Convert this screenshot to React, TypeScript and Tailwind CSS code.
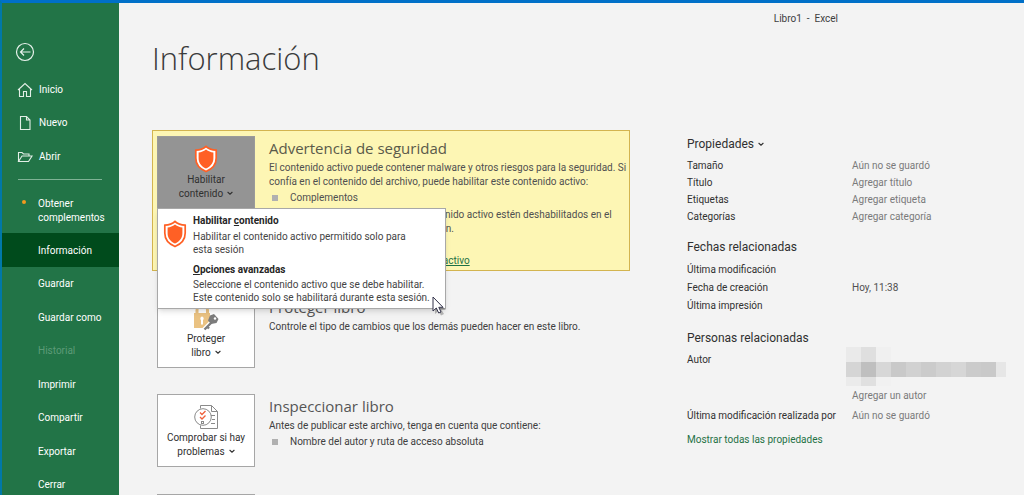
import React from "react";

const rowText = "text-[10px] leading-[14px]";
const sectionTitle = "font-['Open_Sans','Noto_Sans',sans-serif] text-[15px] leading-[25px]";
const groupTitle = "text-[12px] leading-[18px]";

function Chevron() {
  return (
    <svg className="mb-px ml-1 inline-block" width="6" height="5" viewBox="0 0 6 5" fill="none" stroke="currentColor" strokeWidth="1.1">
      <path d="M0.6 1L3 3.2L5.4 1" />
    </svg>
  );
}

function Shield() {
  return (
    <svg width="24" height="28" viewBox="0 0 24 28" fill="none" className="shrink-0">
      <path d="M12 1.5C9.2 4 5.7 5 1.8 5.2V13C1.8 19.5 5.4 23.8 12 26.5C18.6 23.8 22.2 19.5 22.2 13V5.2C18.3 5 14.8 4 12 1.5Z" fill="#fff" stroke="#ff6025" strokeWidth="1.7" />
      <path d="M12 4.6C9.6 6.5 7.2 7.3 4.6 7.5V13.2C4.6 18 7.2 21.3 12 23.5C16.8 21.3 19.4 18 19.4 13.2V7.5C16.8 7.3 14.4 6.5 12 4.6Z" fill="#ff6025" />
    </svg>
  );
}

function LockKey() {
  return (
    <svg width="26" height="28" viewBox="0 0 26 28" fill="none">
      <path d="M4 10V6A5 5 0 0 1 14.500 6V10" stroke="#eac282" strokeWidth="3" />
      <rect x="1" y="9" width="16" height="15" fill="#eac282" />
      <path d="M9 12.500a2 2 0 0 1 1 3.500V20.500h-2v-4.500a2 2 0 0 1 1-3.500Z" fill="#fff" />
      <path d="M11 26L19 18" stroke="#fff" strokeWidth="5" />
      <path d="M17 11.500L21 10L25.500 15L23.500 19L18 20L15 16.500Z" fill="#7c7c7c" />
      <path d="M11.500 25.500L18.500 18.500M14 22.500l2 2" stroke="#7c7c7c" strokeWidth="2.400" />
      <circle cx="22" cy="14.500" r="1.200" fill="#fff" />
    </svg>
  );
}

function Inspect() {
  return (
    <svg width="24" height="24" viewBox="0 0 24 24" fill="none" stroke="#8a8a8a" strokeWidth="1">
      <path d="M6.500 3.500V.5H17.500L23.500 6.500V23.500H6.500V20.500" fill="#fff" />
      <path d="M17.500 .5V6.500H23.500M17 10.500H21M18 14.500H21M17 18.500H21" />
      <circle cx="9" cy="12" r="8.300" fill="#fff" />
      <path d="M6 7.500l2 2 3.500-3.500M6 12l2 2 3.500-3.500" stroke="#ef5f3a" strokeWidth="1.300" />
      <rect x="7.500" y="16.500" width="2" height="2" />
    </svg>
  );
}

function Card({ icon, first, second, dark = false }: { icon: React.ReactNode; first: string; second: string; dark?: boolean }) {
  return (
    <button
      className={
        "flex h-[73px] w-[98px] shrink-0 flex-col items-center border pt-2 text-[10px] leading-[14px] text-[#303030] " +
        (dark ? "border-[#9a9a9a] bg-[#949494]" : "border-[#a6a6a6] bg-white")
      }
    >
      <span className="flex h-7 items-center">{icon}</span>
      <span className="whitespace-nowrap">{first}</span>
      <span className="whitespace-nowrap">
        {second}
        <Chevron />
      </span>
    </button>
  );
}

function Bullet({ children }: { children: React.ReactNode }) {
  return (
    <li className="flex items-center gap-3 pl-[3px] leading-[18px]">
      <span className="h-1.5 w-1.5 bg-[#b0b0b0]" />
      {children}
    </li>
  );
}

const iconProps = { width: 16, height: 16, viewBox: "0 0 16 16", fill: "none", stroke: "#e2eee6", strokeWidth: 1.1 };

const topItems = [
  {
    label: "Inicio",
    icon: (
      <svg {...iconProps}>
        <path d="M2.500 7V14.500H6.500V9.500H9.500V14.500H13.500V7M1 8L8 1.500L15 8" />
      </svg>
    ),
  },
  {
    label: "Nuevo",
    icon: (
      <svg {...iconProps}>
        <path d="M3.500 1.500H9.500L13 5V14.500H3.500ZM9.500 1.500V5H13" />
      </svg>
    ),
  },
  {
    label: "Abrir",
    icon: (
      <svg {...iconProps}>
        <path d="M1.500 12.500V3.500H5L6.500 5H12V7M1.500 12.500L5 7H15L11.500 12.500Z" />
      </svg>
    ),
  },
];

const lowerItems = ["Información", "Guardar", "Guardar como", "Historial", "Imprimir", "Compartir", "Exportar", "Cerrar"];

function Sidebar() {
  return (
    <nav className="flex w-[117px] shrink-0 flex-col bg-[#227447] text-[10px] leading-[14px] text-white">
      <button aria-label="Atrás" className="mt-[39px] ml-[13px] h-5 w-5 shrink-0">
        <svg width="20" height="20" viewBox="0 0 20 20" fill="none" stroke="#e8f2ec" strokeWidth="1.2">
          <circle cx="10" cy="10" r="8.500" />
          <path d="M15.500 10H5.500M9 6.500L5.500 10L9 13.500" />
        </svg>
      </button>
      <div className="mt-[11px] grid h-[100px] shrink-0 auto-rows-fr">
        {topItems.map((item) => (
          <a key={item.label} href="#" className="flex items-center gap-1.5 pt-px pl-[15px]">
            {item.icon}
            {item.label}
          </a>
        ))}
      </div>
      <hr className="mt-1.5 mr-[17px] ml-4 border-[#7fb295]" />
      <a href="#" className="mt-[17px] flex gap-3 pl-5">
        <span className="mt-[3px] h-1 w-1 shrink-0 rounded-full bg-[#f39a1e]" />
        <span>
          Obtener
          <br />
          complementos
        </span>
      </a>
      <div className="mt-[8px] grid h-[268px] shrink-0 auto-rows-fr">
        {lowerItems.map((label) => (
          <a
            key={label}
            href="#"
            className={
              "flex items-center pt-0.5 pl-9 " +
              (label === "Información" ? "bg-[#004b1c]" : label === "Historial" ? "text-[#5d9b78]" : "")
            }
          >
            {label}
          </a>
        ))}
      </div>
    </nav>
  );
}

function Popup() {
  return (
    <div role="menu" className="absolute top-[77px] left-1 z-10 w-[289px] border border-[#a8a8a8] bg-white text-[10px] leading-[13px] text-[#444] shadow-md">
      <button role="menuitem" className="flex w-full gap-1 pt-[5px] pl-[5px] text-left">
        <span className="mt-1.5"><Shield /></span>
        <span className="pl-0.5">
          <b className="block text-[#262626]">
            Habilitar <u>c</u>ontenido
          </b>
          <span className="mt-[3px] block whitespace-nowrap">
            Habilitar el contenido activo permitido solo para
            <br />
            esta sesión
          </span>
        </span>
      </button>
      <button role="menuitem" className="mt-[7px] mb-1 block w-full pl-[35px] text-left">
        <b className="block text-[#262626]">
          <u>O</u>pciones avanzadas
        </b>
        <span className="mt-0.5 block whitespace-nowrap">
          Seleccione el contenido activo que se debe habilitar.
          <br />
          Este contenido solo se habilitará durante esta sesión.
        </span>
      </button>
      <svg className="absolute top-[87px] left-[274px]" width="15" height="20" viewBox="0 0 15 20">
        <path d="M3 3V18L6.500 15L9 19.500L12 18L9.500 14H14Z" fill="#000" opacity=".25" />
        <path d="M1 1V15L4.300 12L6.700 17L9 16L6.800 11.300H11Z" fill="#fff" stroke="#33334a" />
      </svg>
    </div>
  );
}

function Field({ label, children, pitch }: { label: string; children?: React.ReactNode; pitch: string }) {
  return (
    <div className={"flex items-center " + pitch}>
      <dt className="w-[165px] shrink-0 whitespace-nowrap">{label}</dt>
      <dd className="text-[#7a7a7a]">{children}</dd>
    </div>
  );
}

const mosaic = [
  ["bg-[#eaeaea]", "bg-[#d5d5d5]", "bg-[#ebebeb]"],
  ["bg-[#dfdfdf]", "bg-[#bfbfbf]", "bg-[#e0e0e0]"],
  ["bg-[#f0f0f0]", "bg-[#d7d7d7]", "bg-[#f1f1f1]"],
  ["", "bg-[#c9c9c9]", ""],
  ["", "bg-[#d1d1d1]", ""],
  ["", "bg-[#cbcbcb]", ""],
  ["", "bg-[#d2d2d2]", ""],
  ["", "bg-[#d6d6d6]", ""],
  ["", "bg-[#cbcbcb]", ""],
  ["", "bg-[#c9c9c9]", ""],
];

function Properties() {
  return (
    <aside className={"min-w-0 flex-1 pt-[5px] text-[#303030] " + rowText}>
      <h2 className={groupTitle}>
        Propiedades
        <Chevron />
      </h2>
      <dl className="mt-1">
        <Field label="Tamaño" pitch="h-[17px]">Aún no se guardó</Field>
        <Field label="Título" pitch="h-[17px]">Agregar título</Field>
        <Field label="Etiquetas" pitch="h-[17px]">Agregar etiqueta</Field>
        <Field label="Categorías" pitch="h-[17px]">Agregar categoría</Field>
      </dl>
      <h2 className={"mt-[13px] " + groupTitle}>Fechas relacionadas</h2>
      <dl className="mt-[5px]">
        <Field label="Última modificación" pitch="h-[18px]" />
        <Field label="Fecha de creación" pitch="h-[18px]">
          <span className="text-[#505050]">Hoy, 11:38</span>
        </Field>
        <Field label="Última impresión" pitch="h-[18px]" />
      </dl>
      <h2 className={"mt-3.5 " + groupTitle}>Personas relacionadas</h2>
      <dl>
        <div className="flex">
          <dt className="mt-1.5 w-[159px] shrink-0">Autor</dt>
          <dd className="text-[#7a7a7a]">
            <div className="flex" aria-hidden="true">
              {mosaic.map((c, i) => (
                <div key={i}>
                  <div className={"h-[15px] w-[15px] " + c[0]} />
                  <div className={"h-[15px] w-[15px] " + c[1]} />
                  <div className={"h-[9px] w-[15px] " + c[2]} />
                </div>
              ))}
              <div className="mt-[15px] h-[15px] w-[10px] bg-[#e6e6e6]" />
            </div>
            <div className="mt-[3px] pl-1.5">Agregar un autor</div>
          </dd>
        </div>
        <div className="mt-[3px]">
          <Field label="Última modificación realizada por" pitch="h-[20px]">Aún no se guardó</Field>
        </div>
      </dl>
      <a href="#" className="mt-[7px] inline-block text-[#1e7145]">Mostrar todas las propiedades</a>
    </aside>
  );
}

export default function App() {
  return (
    <div className="flex h-screen overflow-hidden border-t-[3px] border-l-2 border-t-[#0070c8] border-l-[#0078a8] bg-[#f3f3f3] font-['Roboto','Open_Sans',sans-serif]">
      <Sidebar />
      <main className="min-w-0 flex-1 pl-[33px]">
        <header className="flex h-[127px] justify-between">
          <h1 className="mt-[31px] font-['Open_Sans','Noto_Sans',sans-serif] text-[31px] leading-[48px] font-light text-[#3b3b3b]">Información</h1>
          <span className="mt-[9px] mr-[186px] text-[10px] leading-[14px] whitespace-pre text-[#404040]">Libro1  -  Excel</span>
        </header>
        <div className="flex gap-[57px]">
          <div className={"w-[478px] shrink-0 text-[#404040] " + rowText}>
            <section className="relative flex h-[141px] gap-3.5 border border-[#d3b44f] bg-[#fdf6b4] pt-[5px] pl-1">
              <Card dark icon={<Shield />} first="Habilitar" second="contenido" />
              <div className="whitespace-nowrap text-[#505050]">
                <h2 className={"text-[#5a5a4a] " + sectionTitle}>Advertencia de seguridad</h2>
                <p>
                  El contenido activo puede contener malware y otros riesgos para la seguridad. Si
                  <br />
                  confía en el contenido del archivo, puede habilitar este contenido activo:
                </p>
                <ul className="mb-px">
                  <Bullet>Complementos</Bullet>
                </ul>
                <p>
                  Es posible que los elementos con contenido activo estén deshabilitados en el
                  <br />
                  este libro hasta que permita su ejecución.
                </p>
                <a href="#" className="mt-[18px] inline-block text-[#1e7145] underline">Más información sobre este contenido activo</a>
              </div>
              <Popup />
            </section>
            <section className="mt-6 flex gap-3.5 pl-[5px]">
              <Card icon={<LockKey />} first="Proteger" second="libro" />
              <div>
                <h2 className={"text-[#555] " + sectionTitle}>Proteger libro</h2>
                <p className="whitespace-nowrap">Controle el tipo de cambios que los demás pueden hacer en este libro.</p>
              </div>
            </section>
            <section className="mt-[26px] flex gap-3.5 pl-[5px]">
              <Card icon={<Inspect />} first="Comprobar si hay" second="problemas" />
              <div>
                <h2 className={"text-[#555] " + sectionTitle}>Inspeccionar libro</h2>
                <p className="whitespace-nowrap">Antes de publicar este archivo, tenga en cuenta que contiene:</p>
                <ul>
                  <Bullet>Nombre del autor y ruta de acceso absoluta</Bullet>
                </ul>
              </div>
            </section>
            <section className="mt-[27px] pl-[5px]">
              <div className="h-[73px] w-[98px] border border-[#a6a6a6] bg-white" />
            </section>
          </div>
          <Properties />
        </div>
      </main>
    </div>
  );
}
